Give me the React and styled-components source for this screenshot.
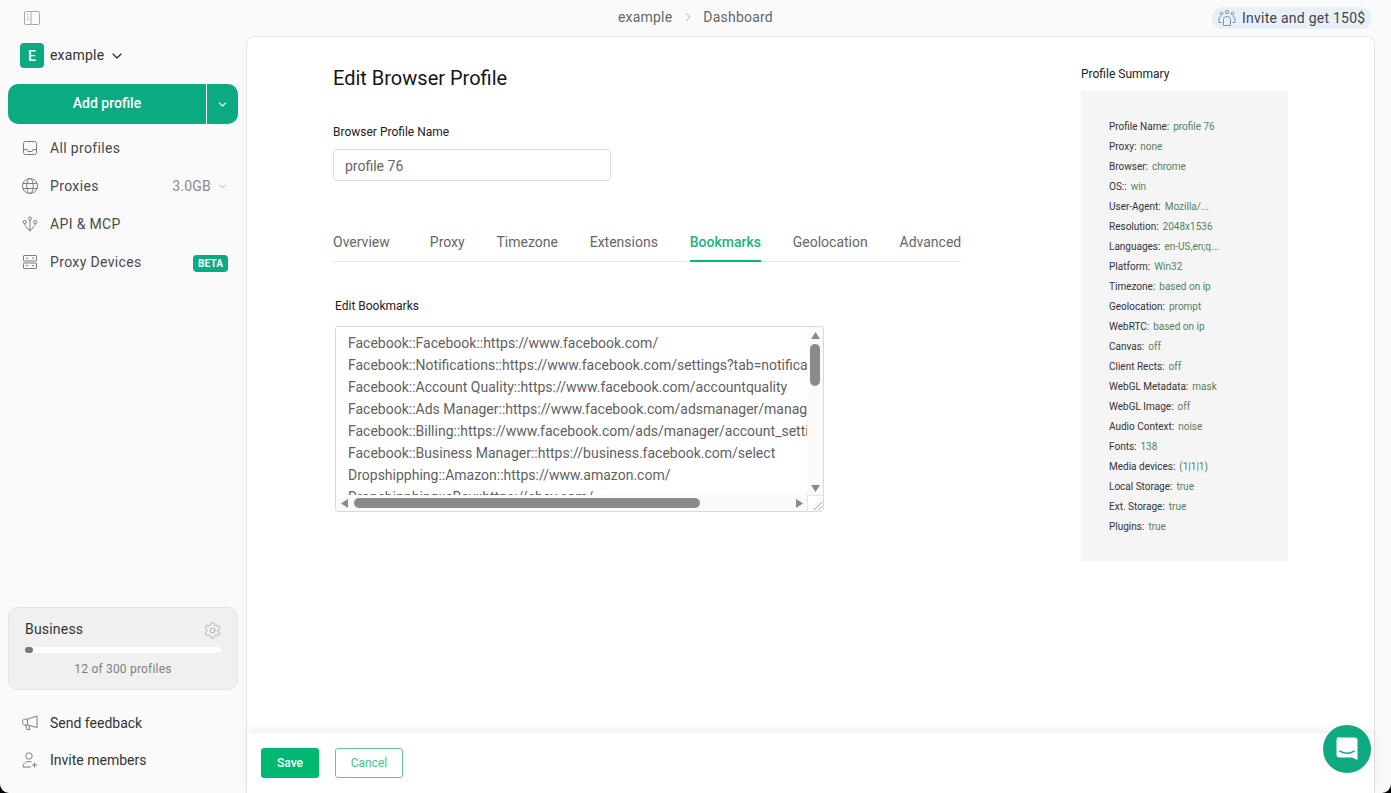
import styled, { createGlobalStyle } from "styled-components";
import { ChevronDown, ChevronRight, Settings } from "lucide-react";

const Global = createGlobalStyle`
  html, body { margin: 0; height: 100%; background: #000; }
  #root { height: 100%; }
  * { box-sizing: border-box; }
  body { font-family: Roboto, "Liberation Sans", sans-serif; overflow: hidden; }
`;

const Shell = styled.div`
  width: 1391px;
  height: 793px;
  display: grid;
  grid-template-columns: 246px 1fr;
  background: #fafafa;
  border-radius: 0 0 9px 9px;
  overflow: hidden;
  position: relative;
`;

const Sidebar = styled.aside`
  display: flex;
  flex-direction: column;
  padding: 9px 8px 15px;
`;

const Toggle = styled.div`
  height: 18px;
  padding-left: 16px;
  color: #a9a9a9;
  display: flex;
  align-items: center;
`;

const Workspace = styled.div`
  display: flex;
  align-items: center;
  gap: 6px;
  margin: 16px 0 16px 12px;
  height: 25px;
  font-size: 14px;
  letter-spacing: 0.2px;
  color: #333;
  svg { margin-left: -1px; }
`;

const WorkspaceName = styled.span`
  margin-bottom: 2px;
`;

const Avatar = styled.span`
  width: 24px;
  height: 25px;
  border-radius: 4px;
  background: #0aab80;
  color: #fff;
  font-weight: 500;
  font-size: 14px;
  display: flex;
  align-items: center;
  justify-content: center;
`;

const AddGroup = styled.div`
  display: flex;
  height: 40px;
  width: 230px;
  margin-bottom: 5px;
  border-radius: 10px;
  overflow: hidden;
  background: #0aab80;
  color: #fff;
`;

const AddMain = styled.div`
  width: 198px;
  display: flex;
  align-items: center;
  justify-content: center;
  padding-bottom: 2px;
  font-size: 14px;
  font-weight: 500;
  border-right: 1px solid #fff;
  box-sizing: content-box;
  height: 38px;
`;

const AddCaret = styled.div`
  flex: 1;
  display: flex;
  align-items: center;
  justify-content: center;
`;

const NavItem = styled.div`
  height: ${(p) => p.$h || 38}px;
  display: flex;
  align-items: center;
  padding: 0 10px 0 14px;
  font-size: 14px;
  letter-spacing: ${(p) => p.$dark ? "0" : "0.35px"};
  color: ${(p) => p.$dark ? "#333" : "#4a4a4a"};
  svg.lead { color: #7d7d7d; flex: none; margin-right: 12px; }
`;

const NavExtra = styled.span`
  margin-left: auto;
  display: flex;
  align-items: center;
  gap: 6px;
  color: #8a8a8a;
  font-size: 14px;
  letter-spacing: 0.2px;
  svg { color: #777; }
`;

const Beta = styled.span`
  margin: 2px 0 0 auto;
  background: #0aab80;
  color: #fff;
  font-size: 10px;
  font-weight: 700;
  letter-spacing: 0.1px;
  padding: 2px 5px;
  border-radius: 4px;
  line-height: 13px;
`;

const Plan = styled.div`
  margin-top: auto;
  margin-bottom: 14px;
  width: 230px;
  height: 83px;
  background: #f0f0f0;
  border: 1px solid #e3e3e3;
  border-radius: 10px;
  padding: 12px 16px 0;
  color: #333;
`;

const PlanHead = styled.div`
  display: flex;
  justify-content: space-between;
  align-items: center;
  font-size: 14px;
  letter-spacing: 0.2px;
  height: 18px;
  svg { color: #9c9c9c; margin: 2px -1px 0 0; }
`;

const PlanTrack = styled.div`
  height: 6px;
  margin-top: 9px;
  border-radius: 3px;
  background: #fff;
`;

const PlanFill = styled.div`
  height: 100%;
  border-radius: 3px;
  background: #777;
`;

const PlanNote = styled.div`
  margin-top: 9px;
  text-align: center;
  font-size: 12px;
  letter-spacing: 0.2px;
  color: #808080;
`;

const Right = styled.div`
  display: flex;
  flex-direction: column;
  min-width: 0;
  padding-right: 16px;
`;

const Topbar = styled.header`
  height: 36px;
  flex: none;
  position: relative;
  display: flex;
  align-items: center;
  justify-content: flex-end;
`;

const Crumbs = styled.div`
  position: absolute;
  left: 372px;
  top: 9px;
  display: flex;
  align-items: center;
  gap: 8.5px;
  font-size: 14px;
  letter-spacing: 0.2px;
  color: #666;
  svg { color: #777; }
`;

const InvitePill = styled.div`
  height: 22px;
  width: 159px;
  margin-right: 4px;
  display: flex;
  align-items: center;
  gap: 6px;
  padding: 0 0 1px 6px;
  background: #e8f1fb;
  border-radius: 9px;
  font-size: 14px;
  color: #444;
  letter-spacing: 0.25px;
  white-space: nowrap;
`;

const Panel = styled.main`
  flex: 1;
  min-height: 0;
  display: flex;
  flex-direction: column;
  background: #fff;
  border: 1px solid #e6e6e6;
  border-bottom: 0;
  border-radius: 8px 8px 0 0;
`;

const Content = styled.div`
  flex: 1;
  display: flex;
  padding-left: 86px;
`;

const Editor = styled.section`
  width: 628px;
`;

const Heading = styled.h1`
  margin: 28px 0 0;
  font-size: 20px;
  line-height: 26px;
  font-weight: 400;
  color: #151515;
`;

const FieldLabel = styled.div`
  font-size: 12px;
  line-height: 16px;
  color: #222;
  margin-left: ${(p) => p.$indent || 0}px;
`;

const NameBlock = styled.div`
  margin-top: 33px;
`;

const NameInput = styled.input`
  display: block;
  margin-top: 9px;
  width: 278px;
  height: 32px;
  padding: 2px 11px 0;
  border: 1px solid #dcdcdc;
  border-radius: 4px;
  font: 400 14px Roboto, sans-serif;
  color: #666;
  outline: none;
`;

const Tabs = styled.nav`
  margin-top: 44px;
  height: 37px;
  display: flex;
  gap: 31.8px;
  border-bottom: 1px solid #e8e8e8;
`;

const Tab = styled.div`
  flex: none;
  width: ${(p) => p.$w ? `${p.$w}px` : "auto"};
  height: 37px;
  padding-top: 8px;
  font-size: 14px;
  line-height: 18px;
  white-space: nowrap;
  font-weight: ${(p) => p.$active ? 500 : 400};
  color: ${(p) => p.$active ? "#1eb47a" : "#666"};
  border-bottom: ${(p) => p.$active ? "2px solid #00b871" : "0"};
`;

const BookmarksBlock = styled.div`
  margin-top: 36px;
`;

const BoxFrame = styled.div`
  margin: 12px 0 0 2px;
  width: 489px;
  height: 186px;
  display: grid;
  grid-template-columns: 1fr 16px;
  grid-template-rows: 1fr 16px;
  border: 1px solid #d9d9d9;
  border-radius: 3px;
  overflow: hidden;
  background: #fff;
`;

const BookmarkText = styled.textarea`
  border: 0;
  outline: none;
  resize: none;
  overflow: hidden;
  white-space: pre;
  padding: 5px 0 0 12px;
  font: 400 14px/22px Roboto, sans-serif;
  color: #5f5f5f;
  width: 100%;
  height: 100%;
`;

const VBar = styled.div`
  background: #fafafa;
  display: flex;
  flex-direction: column;
  align-items: center;
  padding: 3px 0 1px;
`;

const HBar = styled.div`
  background: #fafafa;
  display: flex;
  align-items: center;
  padding: 0 3px 0 4px;
`;

const Track = styled.div`
  flex: 1;
  display: flex;
  min-width: 0;
  min-height: 0;
  flex-direction: ${(p) => p.$vertical ? "column" : "row"};
`;

const Thumb = styled.div`
  background: #8a8a8a;
  border-radius: 5px;
  ${(p) => p.$vertical
    ? `width: 10px; height: ${p.$size}px; margin-top: ${p.$start}px;`
    : `height: 10px; width: ${p.$size}px; margin-left: ${p.$start}px;`}
`;

const Corner = styled.div`
  background: #fff;
  border-left: 1px solid #e4e4e4;
  border-top: 1px solid #e4e4e4;
  display: flex;
  align-items: flex-end;
  justify-content: flex-end;
`;

const ArrowIcon = styled.svg`
  flex: none;
  margin: ${(p) => p.$vertical ? "2px 0" : "0 1px"};
`;

const Summary = styled.aside`
  margin-left: 120px;
  width: 207px;
  padding-top: 29px;
`;

const SummaryTitle = styled.div`
  font-size: 12px;
  line-height: 16px;
  color: #222;
`;

const SummaryBox = styled.div`
  margin-top: 9px;
  height: 470px;
  background: #f5f5f5;
  padding: 26px 10px 0 28px;
`;

const SummaryRow = styled.div`
  height: 20px;
  line-height: 20px;
  font-size: 10px;
  white-space: nowrap;
  color: #333;
  span { color: #55805f; margin-left: 1.5px; }
`;

const Footer = styled.footer`
  height: 60px;
  flex: none;
  display: flex;
  align-items: center;
  gap: 16px;
  padding: 0 0 1px 14px;
  background: #fff;
  box-shadow: 0 -3px 10px rgba(0, 0, 0, 0.07);
  position: relative;
`;

const SaveButton = styled.button`
  width: 58px;
  height: 30px;
  border: 0;
  border-radius: 3px;
  background: #00b871;
  color: #fff;
  font: 500 12px Roboto, sans-serif;
`;

const CancelButton = styled.button`
  width: 68px;
  height: 30px;
  border: 1px solid #5cc99a;
  border-radius: 3px;
  background: #fff;
  color: #46c08c;
  font: 400 12px Roboto, sans-serif;
`;

const ChatBubble = styled.div`
  position: absolute;
  left: 1323px;
  top: 725px;
  width: 48px;
  height: 48px;
  border-radius: 50%;
  background: #0fa97f;
  display: flex;
  align-items: center;
  justify-content: center;
`;

const PanelToggleIcon = () => (
  <svg width="16" height="14" viewBox="0 0 16 14" fill="none" stroke="currentColor" strokeWidth="1">
    <rect x="0.5" y="0.5" width="15" height="13" rx="1.5" />
    <path d="M7 0.5v13" />
    <path d="M3 3.5h1.5M3 6h1.5M3 8.5h1.5" />
  </svg>
);

const LeadIcon = ({ children }) => (
  <svg className="lead" width="16" height="16" viewBox="0 0 16 16" fill="none" stroke="currentColor" strokeWidth="1">
    {children}
  </svg>
);

const TrayIcon = () => (
  <LeadIcon>
    <rect x="1.500" y="1.500" width="13" height="13" rx="2" />
    <path d="M1.500 9.500h3.500l1 2h4l1-2h3.500" />
  </LeadIcon>
);

const GlobeIcon = () => (
  <LeadIcon>
    <circle cx="8" cy="8" r="7.500" />
    <ellipse cx="8" cy="8" rx="3.300" ry="7.500" />
    <path d="M0.800 5.500h14.400M0.800 10.500h14.400" />
  </LeadIcon>
);

const ApiIcon = () => (
  <LeadIcon>
    <circle cx="8" cy="2.500" r="1.500" />
    <path d="M8 4v11.500" />
    <circle cx="2.700" cy="6" r="1.600" />
    <path d="M2.700 7.600c0 3 2 2.600 2.500 4.400.3 1 1 1.500 2.800 2" />
    <circle cx="13.300" cy="6" r="1.600" />
    <path d="M13.300 7.600c0 3-2 2.600-2.500 4.400-.3 1-1 1.500-2.800 2" />
  </LeadIcon>
);

const DevicesIcon = () => (
  <LeadIcon>
    <rect x="1.500" y="1.500" width="13" height="5.500" rx="0.500" />
    <rect x="1.500" y="9" width="13" height="5.500" rx="0.500" />
    <path d="M4 4.200h2M10 4.200h2M4 11.700h2M10 11.700h2" />
  </LeadIcon>
);

const HornIcon = () => (
  <LeadIcon>
    <path d="M15 1v11.500L5.500 10H2.500C1.500 10 .7 9 .7 7.500V6c0-1 .8-1.800 1.800-1.800H5.500z" />
    <path d="M3.500 10l1.500 4.500h3l-1-3.500" />
    <path d="M5.500 4.200V10" />
  </LeadIcon>
);

const AddUserIcon = () => (
  <LeadIcon>
    <circle cx="7" cy="4" r="3.200" />
    <path d="M1 15c0-3.500 2.500-5.500 6-5.500 1 0 2 .2 2.800.6M1 15h8" />
    <path d="M12.500 10.500v5M10 13h5" />
  </LeadIcon>
);

const GroupIcon = () => (
  <svg width="18" height="18" viewBox="0 0 18 18" fill="none" stroke="#77838f" strokeWidth="0.9">
    <circle cx="9" cy="3" r="1.700" />
    <circle cx="3.500" cy="4.500" r="1.300" />
    <circle cx="14.500" cy="4.500" r="1.300" />
    <path d="M5.500 16.500v-6c0-2 1.500-3 3.500-3s3.500 1 3.500 3v6z" />
    <path d="M3.500 7c-1.500.2-2.500 1.200-2.500 3v3.500h2.500M14.500 7c1.500.2 2.500 1.200 2.500 3v3.500h-2.500" />
  </svg>
);

const ChatIcon = () => (
  <svg width="22" height="24" viewBox="0 0 22 24">
    <path fill="#fff" d="M3.500 0.500h15a3 3 0 0 1 3 3v19.500l-5.500-2.500H3.500a3 3 0 0 1-3-3v-14.500a3 3 0 0 1 3-3z" />
    <path fill="none" stroke="#0fa97f" strokeWidth="1.500" strokeLinecap="round" d="M3.800 14.200c4.500 2.600 9.900 2.600 14.400 0" />
  </svg>
);

const Arrow = ({ dir }) => {
  const d = {
    up: "M4.500 0L9 7H0z",
    down: "M0 0h9L4.500 7z",
    left: "M7 0v9L0 4.500z",
    right: "M0 0l7 4.500L0 9z",
  }[dir];
  const vertical = dir === "up" || dir === "down";
  return (
    <ArrowIcon $vertical={vertical} width={vertical ? 9 : 7} height={vertical ? 7 : 9} viewBox={vertical ? "0 0 9 7" : "0 0 7 9"}>
      <path d={d} fill="#8a8a8a" />
    </ArrowIcon>
  );
};

const bookmarks = [
  "Facebook::Facebook::https://www.facebook.com/",
  "Facebook::Notifications::https://www.facebook.com/settings?tab=notifications",
  "Facebook::Account Quality::https://www.facebook.com/accountquality",
  "Facebook::Ads Manager::https://www.facebook.com/adsmanager/manage/campaigns",
  "Facebook::Billing::https://www.facebook.com/ads/manager/account_settings",
  "Facebook::Business Manager::https://business.facebook.com/select",
  "Dropshipphing::Amazon::https://www.amazon.com/",
  "Dropshipphing::eBay::https://ebay.com/",
].join("\n");

const summary = [
  ["Profile Name:", "profile 76"],
  ["Proxy:", "none"],
  ["Browser:", "chrome"],
  ["OS::", "win"],
  ["User-Agent:", "Mozilla/..."],
  ["Resolution:", "2048x1536"],
  ["Languages:", "en-US,en;q..."],
  ["Platform:", "Win32"],
  ["Timezone:", "based on ip"],
  ["Geolocation:", "prompt"],
  ["WebRTC:", "based on ip"],
  ["Canvas:", "off"],
  ["Client Rects:", "off"],
  ["WebGL Metadata:", "mask"],
  ["WebGL Image:", "off"],
  ["Audio Context:", "noise"],
  ["Fonts:", "138"],
  ["Media devices:", "(1|1|1)"],
  ["Local Storage:", "true"],
  ["Ext. Storage:", "true"],
  ["Plugins:", "true"],
];

const tabs = ["Overview", "Proxy", "Timezone", "Extensions", "Bookmarks", "Geolocation", "Advanced"];

export default function App() {
  return (
    <Shell>
      <Global />
      <Sidebar>
        <Toggle><PanelToggleIcon /></Toggle>
        <Workspace>
          <Avatar>E</Avatar>
          <WorkspaceName>example</WorkspaceName>
          <ChevronDown size={16} strokeWidth={2} color="#333" />
        </Workspace>
        <AddGroup>
          <AddMain>Add profile</AddMain>
          <AddCaret><ChevronDown size={13} strokeWidth={2} /></AddCaret>
        </AddGroup>
        <NavItem><TrayIcon />All profiles</NavItem>
        <NavItem>
          <GlobeIcon />Proxies
          <NavExtra>3.0GB <ChevronDown size={11} strokeWidth={1.2} /></NavExtra>
        </NavItem>
        <NavItem><ApiIcon />API &amp; MCP</NavItem>
        <NavItem>
          <DevicesIcon />Proxy Devices
          <Beta>BETA</Beta>
        </NavItem>
        <Plan>
          <PlanHead>Business<Settings size={19} strokeWidth={1} /></PlanHead>
          <PlanTrack><PlanFill style={{ width: `${(12 / 300) * 100}%` }} /></PlanTrack>
          <PlanNote>12 of 300 profiles</PlanNote>
        </Plan>
        <NavItem $dark $h={37}><HornIcon />Send feedback</NavItem>
        <NavItem $dark $h={37}><AddUserIcon />Invite members</NavItem>
      </Sidebar>
      <Right>
        <Topbar>
          <Crumbs>example <ChevronRight size={14} strokeWidth={1} /> Dashboard</Crumbs>
          <InvitePill><GroupIcon />Invite and get 150$</InvitePill>
        </Topbar>
        <Panel>
          <Content>
            <Editor>
              <Heading>Edit Browser Profile</Heading>
              <NameBlock>
                <FieldLabel>Browser Profile Name</FieldLabel>
                <NameInput defaultValue="profile 76" />
              </NameBlock>
              <Tabs>
                {tabs.map((t, i) => (
                  <Tab key={t} $w={i === 0 ? 65 : 0} $active={t === "Bookmarks"}>{t}</Tab>
                ))}
              </Tabs>
              <BookmarksBlock>
                <FieldLabel $indent={2}>Edit Bookmarks</FieldLabel>
                <BoxFrame>
                  <BookmarkText readOnly defaultValue={bookmarks} />
                  <VBar>
                    <Arrow dir="up" />
                    <Track $vertical><Thumb $vertical $start={3} $size={42} /></Track>
                    <Arrow dir="down" />
                  </VBar>
                  <HBar>
                    <Arrow dir="left" />
                    <Track><Thumb $start={5} $size={346} /></Track>
                    <Arrow dir="right" />
                  </HBar>
                  <Corner>
                    <svg width="11" height="11" viewBox="0 0 11 11" stroke="#888" strokeWidth="0.8">
                      <path d="M2 10L10 2M6.500 10L10 6.500" />
                    </svg>
                  </Corner>
                </BoxFrame>
              </BookmarksBlock>
            </Editor>
            <Summary>
              <SummaryTitle>Profile Summary</SummaryTitle>
              <SummaryBox>
                {summary.map(([k, v]) => (
                  <SummaryRow key={k}>{k} <span>{v}</span></SummaryRow>
                ))}
              </SummaryBox>
            </Summary>
          </Content>
          <Footer>
            <SaveButton>Save</SaveButton>
            <CancelButton>Cancel</CancelButton>
          </Footer>
        </Panel>
      </Right>
      <ChatBubble><ChatIcon /></ChatBubble>
    </Shell>
  );
}
